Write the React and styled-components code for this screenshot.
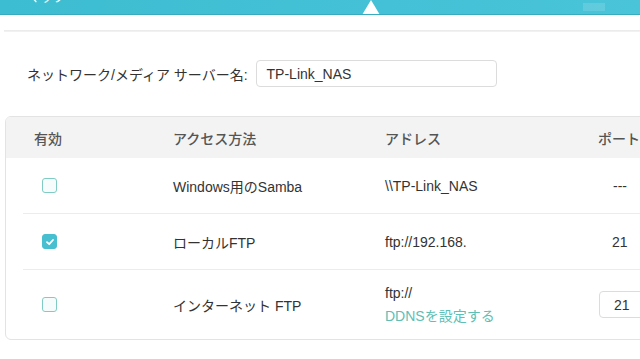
import React from "react";
import styled, { createGlobalStyle } from "styled-components";

const Global = createGlobalStyle`
  html, body { margin: 0; padding: 0; background: #fff; overflow: hidden; }
  body { font-family: "Liberation Sans", "Noto Sans CJK JP", sans-serif; color: #333; }
  * { box-sizing: border-box; }
`;

const Page = styled.div`
  width: 640px;
  height: 359px;
  overflow: hidden;
  background: #fff;
`;

const TopBar = styled.div`
  position: relative;
  height: 15px;
  display: flex;
  align-items: flex-start;
  overflow: hidden;
  background: linear-gradient(90deg, #3dbdd1 0%, #44c1d6 60%, #49c4d9 100%);
  border-bottom: 1px solid #38abc0;
`;

const NavText = styled.span`
  margin-left: 28px;
  margin-top: -8px;
  font-size: 12px;
  line-height: 12px;
  color: #fff;
  letter-spacing: 0.5px;
`;

const ActiveMark = styled.span`
  position: absolute;
  left: 362px;
  bottom: -1px;
  width: 0;
  height: 0;
  border-left: 9px solid transparent;
  border-right: 9px solid transparent;
  border-bottom: 15px solid #fff;
`;

const FadedIcon = styled.span`
  margin-left: auto;
  margin-right: 35px;
  margin-top: 3px;
  width: 22px;
  height: 8px;
  background: rgba(255, 255, 255, 0.14);
`;

const Divider = styled.div`
  margin: 15px 0 0 4px;
  height: 2px;
  background: linear-gradient(#e9e9e9, #f4f4f4);
`;

const FormRow = styled.div`
  display: flex;
  align-items: center;
  gap: 8px;
  margin: 28px 0 0 27px;
`;

const Label = styled.label`
  font-size: 14px;
  color: #333;
`;

const TextBox = styled.div`
  width: ${(p) => p.$w}px;
  height: 27px;
  display: flex;
  align-items: center;
  padding-left: ${(p) => p.$pad}px;
  border: 1px solid #dcdcdc;
  border-radius: 4px;
  font-size: 14px;
  color: #333;
  background: #fff;
`;

const Card = styled.div`
  margin: 29px 0 0 5px;
  width: 660px;
  border: 1px solid #e3e3e3;
  border-radius: 6px;
  overflow: hidden;
`;

const cols = "139px 212px 213px 1fr";

const HeadRow = styled.div`
  display: grid;
  grid-template-columns: ${cols};
  align-items: center;
  height: 41px;
  padding-left: 28px;
  background: #f3f3f3;
  font-size: 14px;
  font-weight: 500;
  color: #555;
`;

const Row = styled.div`
  display: grid;
  grid-template-columns: ${cols};
  align-items: center;
  height: ${(p) => p.$h}px;
  margin-left: 17px;
  padding-left: 11px;
  border-bottom: ${(p) => (p.$last ? "none" : "1px solid #ececec")};
  font-size: 14px;
  color: #333;
`;

const CheckCell = styled.div`
  padding-left: 8px;
  display: flex;
  align-items: center;
`;

const Check = styled.span`
  width: 15px;
  height: 15px;
  border-radius: 3px;
  border: 1px solid ${(p) => (p.$on ? "#47bfd0" : "#80ccc4")};
  background: ${(p) => (p.$on ? "#47bfd0" : "#f6fcfc")};
  display: flex;
  align-items: center;
  justify-content: center;
`;

const AddrCell = styled.div`
  display: flex;
  flex-direction: column;
  gap: 5px;
  line-height: 18px;
`;

const Link = styled.span`
  color: #5cc0b6;
`;

const PortCell = styled.div`
  padding-left: ${(p) => p.$pad}px;
`;

const Checkbox = ({ on }) => (
  <Check $on={on}>
    {on && (
      <svg width="10" height="10" viewBox="0 0 10 10">
        <path d="M2 5.2 L4.2 7.2 L8 3" fill="none" stroke="#fff" strokeWidth="1.8" strokeLinecap="round" strokeLinejoin="round" />
      </svg>
    )}
  </Check>
);

export default function App() {
  return (
    <Page>
      <Global />
      <TopBar>
        <NavText>マップ</NavText>
        <ActiveMark />
        <FadedIcon />
      </TopBar>
      <Divider />
      <FormRow>
        <Label>ネットワーク/メディア サーバー名:</Label>
        <TextBox $w={241} $pad={10}>TP-Link_NAS</TextBox>
      </FormRow>
      <Card>
        <HeadRow>
          <span>有効</span>
          <span>アクセス方法</span>
          <span>アドレス</span>
          <span>ポート</span>
        </HeadRow>
        <Row $h={56}>
          <CheckCell><Checkbox on={false} /></CheckCell>
          <span>Windows用のSamba</span>
          <span>\\TP-Link_NAS</span>
          <PortCell $pad={15}>---</PortCell>
        </Row>
        <Row $h={56}>
          <CheckCell><Checkbox on={true} /></CheckCell>
          <span>ローカルFTP</span>
          <span>ftp://192.168.</span>
          <PortCell $pad={14}>21</PortCell>
        </Row>
        <Row $h={69} $last>
          <CheckCell><Checkbox on={false} /></CheckCell>
          <span>インターネット FTP</span>
          <AddrCell>
            <span>ftp://</span>
            <Link>DDNSを設定する</Link>
          </AddrCell>
          <PortCell $pad={1}>
            <TextBox $w={60} $pad={14}>21</TextBox>
          </PortCell>
        </Row>
      </Card>
    </Page>
  );
}
